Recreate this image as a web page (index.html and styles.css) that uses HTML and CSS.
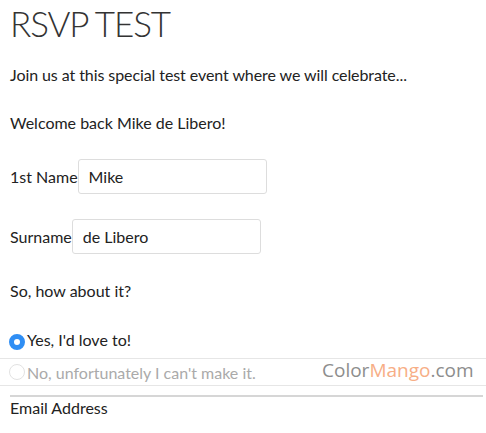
FILE: index.html
```html
<!DOCTYPE html>
<html>
<head>
<meta charset="utf-8">
<link rel="stylesheet" href="styles.css">
</head>
<body>
<h1 class="title">RSVP TEST</h1>
<p class="text intro">Join us at this special test event where we will celebrate...</p>
<p class="text welcome">Welcome back Mike de Libero!</p>
<div class="field first">
  <label class="label">1st Name</label>
  <input class="input" type="text" value="Mike">
</div>
<div class="field second">
  <label class="label">Surname</label>
  <input class="input" type="text" value="de Libero">
</div>
<p class="text question">So, how about it?</p>
<div class="choices">
  <div class="choice yes"><span class="radio checked"></span><span class="choice-text">Yes, I'd love to!</span></div>
  <div class="choice no"><span class="radio"></span><span class="choice-text">No, unfortunately I can't make it.</span></div>
</div>
<div class="email">Email Address</div>
<div class="watermark"><span class="wm-gray">Color</span><span class="wm-orange">Mango</span><span class="wm-gray">.com</span></div>
</body>
</html>
```
FILE: styles.css
```css
html, body {
  margin: 0;
  padding: 0;
}
body {
  padding: 0 10px;
  font-family: Lato, "Open Sans", sans-serif;
  font-size: 16px;
  color: #222;
  background: #fff;
  position: relative;
  overflow: hidden;
  height: 433px;
  box-sizing: border-box;
}
.title {
  margin: 0;
  padding-top: 3px;
  font-weight: 300;
  font-size: 35px;
  line-height: 40px;
  letter-spacing: -1.1px;
  color: #333;
}
.text {
  margin: 0;
  line-height: 24px;
}
.intro {
  margin-top: 20px;
  letter-spacing: -0.08px;
}
.welcome {
  margin-top: 24px;
}
.field {
  display: flex;
  align-items: center;
}
.first {
  margin-top: 24px;
}
.second {
  margin-top: 25px;
}
.label {
  font-size: 16px;
}
.input {
  width: 189px;
  height: 35px;
  box-sizing: border-box;
  border: 1px solid #ddd;
  border-radius: 3px;
  padding: 0 10px;
  font-family: Lato, sans-serif;
  font-size: 16px;
  color: #222;
  outline: none;
}
.question {
  margin-top: 25px;
}
.choices {
  margin: 23px -10px 0;
}
.choice {
  display: flex;
  align-items: center;
  padding-left: 9px;
  border-bottom: 1px solid #e6e6e6;
}
.yes {
  height: 32px;
}
.yes .choice-text {
  margin-bottom: 5px;
}
.no {
  height: 26px;
  color: #aaa;
}
.radio {
  width: 16px;
  height: 16px;
  box-sizing: border-box;
  border-radius: 50%;
  border: 1px solid #e2e2e2;
  margin-right: 2px;
  flex: none;
}
.radio.checked {
  border: 5px solid #2f8ef4;
  background: #fff;
}
.email {
  margin-top: 9px;
  padding-top: 1px;
  border-top: 2px solid #d6d6d6;
  line-height: 20px;
  margin-right: -7px;
}
.watermark {
  position: absolute;
  left: 322px;
  top: 357px;
  font-family: "Open Sans", sans-serif;
  font-size: 19px;
}
.wm-gray {
  color: #8d8d8d;
}
.wm-orange {
  color: #f7ae86;
}
```
